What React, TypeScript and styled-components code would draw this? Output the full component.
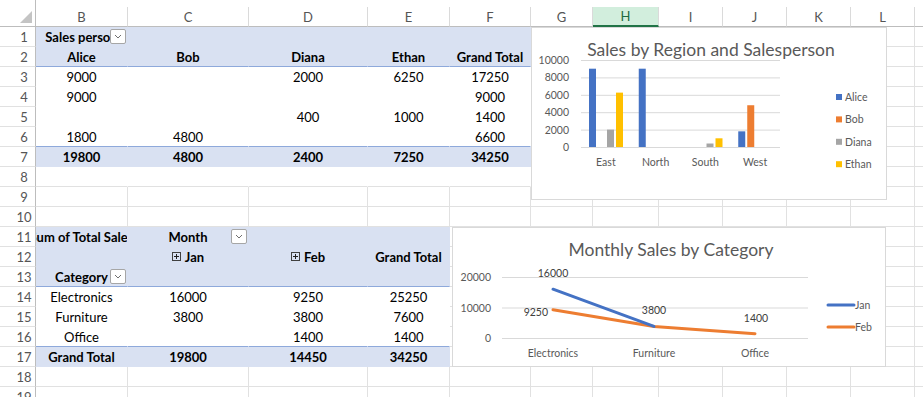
import React from 'react';
import styled, { createGlobalStyle } from 'styled-components';

const GlobalStyle = createGlobalStyle`
  html, body { margin: 0; padding: 0; background: #fff; overflow: hidden; }
  body { font-family: Lato, "Open Sans", sans-serif; }
`;

const COLS = ['B', 'C', 'D', 'E', 'F', 'G', 'H', 'I', 'J', 'K', 'L', 'M'];
const WIDTHS = [92, 121, 119, 82, 81, 62, 66, 64, 64, 64, 64, 64];
const ROWS = Array.from({ length: 19 }, (_, i) => i + 1);

const GRID = '#E1E1E1';
const PIVOT = '#D9E1F2';
const PIVOT_LINE = '#8EA9DB';

const Sheet = styled.div`
  position: relative;
  width: 923px;
  height: 397px;
  overflow: hidden;
  display: grid;
  grid-template-columns: 36px ${WIDTHS.map((w) => w + 'px').join(' ')};
  grid-template-rows: 27px repeat(19, 20px);
  font-size: 13px;
  color: #000;
`;

const Corner = styled.div`
  position: relative;
  box-sizing: border-box;
  border-right: 1px solid #BDBDBD;
  border-bottom: 1px solid #BDBDBD;
  &::after {
    content: '';
    position: absolute;
    right: 3px;
    bottom: 3px;
    border-style: solid;
    border-width: 0 0 12px 12px;
    border-color: transparent transparent #C4C4C4 transparent;
  }
`;

const ColHead = styled.div<{ $active?: boolean }>`
  box-sizing: border-box;
  margin-top: 7px;
  display: flex;
  align-items: center;
  justify-content: center;
  font-size: 13px;
  color: ${(p) => (p.$active ? '#1E6B41' : '#555')};
  background: ${(p) => (p.$active ? '#D2EEDD' : '#fff')};
  border-right: 1px solid #DADADA;
  border-bottom: ${(p) => (p.$active ? '2px solid #217346' : '1px solid #BDBDBD')};
`;

const RowHead = styled.div`
  box-sizing: border-box;
  display: flex;
  align-items: center;
  justify-content: center;
  padding-left: 13px;
  font-size: 13px;
  color: #555;
  border-right: 1px solid #BDBDBD;
  border-bottom: 1px solid ${GRID};
`;

const Cell = styled.div<{ $fill: string; $bold: boolean; $right: string; $bottom: string }>`
  position: relative;
  box-sizing: border-box;
  display: flex;
  align-items: center;
  justify-content: center;
  overflow: hidden;
  white-space: nowrap;
  background: ${(p) => p.$fill};
  font-weight: ${(p) => (p.$bold ? 700 : 400)};
  border-right: 1px solid ${(p) => p.$right};
  border-bottom: 1px solid ${(p) => p.$bottom};
`;

const Dropdown = styled.span`
  position: absolute;
  right: 1px;
  top: 2px;
  width: 16px;
  height: 15px;
  box-sizing: border-box;
  background: #fff;
  border: 1px solid #A6A6A6;
  border-radius: 2px;
  display: flex;
  align-items: center;
  justify-content: center;
`;

const PlusBox = styled.span`
  position: relative;
  display: inline-block;
  width: 9px;
  height: 9px;
  box-sizing: border-box;
  border: 1px solid #404040;
  margin-right: 4px;
  &::before, &::after {
    content: '';
    position: absolute;
    background: #202020;
  }
  &::before { left: 1px; right: 1px; top: 3px; height: 1px; }
  &::after { top: 1px; bottom: 1px; left: 3px; width: 1px; }
`;

const ChartBox = styled.div<{ $x: number; $y: number; $w: number; $h: number }>`
  position: absolute;
  left: ${(p) => p.$x}px;
  top: ${(p) => p.$y}px;
  width: ${(p) => p.$w}px;
  height: ${(p) => p.$h}px;
  box-sizing: border-box;
  background: #fff;
  border: 1px solid #D9D9D9;
  font-family: Lato, sans-serif;
`;

type Content = { text?: string; drop?: boolean; plus?: boolean };

const data: Record<number, (string | Content)[]> = {
  1: [{ text: 'Sales person', drop: true }],
  2: ['Alice', 'Bob', 'Diana', 'Ethan', 'Grand Total'],
  3: ['9000', '', '2000', '6250', '17250'],
  4: ['9000', '', '', '', '9000'],
  5: ['', '', '400', '1000', '1400'],
  6: ['1800', '4800', '', '', '6600'],
  7: ['19800', '4800', '2400', '7250', '34250'],
  11: ['Sum of Total Sales', { text: 'Month', drop: true }],
  12: ['', { text: 'Jan', plus: true }, { text: 'Feb', plus: true }, 'Grand Total'],
  13: [{ text: 'Category', drop: true }],
  14: ['Electronics', '16000', '9250', '25250'],
  15: ['Furniture', '3800', '3800', '7600'],
  16: ['Office', '', '1400', '1400'],
  17: ['Grand Total', '19800', '14450', '34250'],
};

function cellStyle(r: number, c: number) {
  if (r <= 8 && c <= 4) {
    const filled = r === 1 || r === 2 || r === 7;
    return {
      fill: filled ? PIVOT : '#fff',
      bold: filled,
      right: 'transparent',
      bottom: r === 2 || r === 6 ? PIVOT_LINE : r === 8 ? GRID : 'transparent',
    };
  }
  if (r >= 11 && r <= 17 && c <= 3) {
    const filled = r <= 13 || r === 17;
    return {
      fill: filled ? PIVOT : '#fff',
      bold: filled,
      right: 'transparent',
      bottom: r === 13 || r === 16 ? PIVOT_LINE : 'transparent',
    };
  }
  return { fill: '#fff', bold: false, right: GRID, bottom: GRID };
}

const Chevron = () => (
  <svg width="8" height="5" viewBox="0 0 8 5">
    <path d="M1 1 L4 4 L7 1" fill="none" stroke="#707070" strokeWidth="1" />
  </svg>
);

const AXIS = '#595959';
const BLUE = '#4472C4';
const ORANGE = '#ED7D31';
const GREY = '#A5A5A5';
const GOLD = '#FFC000';

const regions = ['East', 'North', 'South', 'West'];
const series = [
  { name: 'Alice', color: BLUE, values: [9000, 9000, 0, 1800] },
  { name: 'Bob', color: ORANGE, values: [0, 0, 0, 4800] },
  { name: 'Diana', color: GREY, values: [2000, 0, 400, 0] },
  { name: 'Ethan', color: GOLD, values: [6250, 0, 1000, 0] },
];

const BarChart = () => {
  const left = 49;
  const right = 248;
  const base = 119;
  const scale = 87 / 10000;
  const step = (right - left) / 4;
  return (
    <ChartBox $x={531} $y={27} $w={356} $h={173}>
      <svg width="356" height="173" style={{ display: 'block' }}>
        <text x="179" y="28" textAnchor="middle" fontSize="17.5" fill={AXIS}>
          Sales by Region and Salesperson
        </text>
        {[0, 2000, 4000, 6000, 8000, 10000].map((v) => {
          const y = base - v * scale;
          return (
            <g key={v}>
              <line x1={left} x2={right} y1={y + 0.5} y2={y + 0.5} stroke="#D9D9D9" />
              <text x="37" y={y + 4} textAnchor="end" fontSize="10.5" fill={AXIS}>{v}</text>
            </g>
          );
        })}
        {regions.map((reg, i) => (
          <g key={reg}>
            {series.map((s, j) =>
              s.values[i] ? (
                <rect
                  key={s.name}
                  x={left + i * step + 8 + j * 9}
                  y={base - s.values[i] * scale}
                  width="7"
                  height={s.values[i] * scale}
                  fill={s.color}
                />
              ) : null
            )}
            <text x={left + i * step + step / 2} y="138" textAnchor="middle" fontSize="10.5" fill={AXIS}>
              {reg}
            </text>
          </g>
        ))}
        {series.map((s, j) => {
          const y = 69 + j * 22.4;
          return (
            <g key={s.name}>
              <rect x="304" y={y - 3} width="6" height="6" fill={s.color} />
              <text x="313" y={y + 4} fontSize="10.5" fill={AXIS}>{s.name}</text>
            </g>
          );
        })}
      </svg>
    </ChartBox>
  );
};

const LineChart = () => {
  const left = 49;
  const right = 355;
  const base = 110;
  const scale = 61 / 20000;
  const cx = [100, 201, 302];
  const y = (v: number) => base - v * scale;
  const jan = [16000, 3800];
  const feb = [9250, 3800, 1400];
  return (
    <ChartBox $x={452} $y={227} $w={434} $h={140}>
      <svg width="434" height="140" style={{ display: 'block' }}>
        <text x="218" y="28" textAnchor="middle" fontSize="17.5" fill={AXIS}>
          Monthly Sales by Category
        </text>
        {[0, 10000, 20000].map((v) => (
          <g key={v}>
            <line x1={left} x2={right} y1={y(v) + 0.5} y2={y(v) + 0.5} stroke="#D9D9D9" />
            <text x="38" y={y(v) + 4} textAnchor="end" fontSize="10.5" fill={AXIS}>{v}</text>
          </g>
        ))}
        <polyline
          points={feb.map((v, i) => `${cx[i]},${y(v)}`).join(' ')}
          fill="none"
          stroke={ORANGE}
          strokeWidth="3"
          strokeLinecap="round"
          strokeLinejoin="round"
        />
        <polyline
          points={jan.map((v, i) => `${cx[i]},${y(v)}`).join(' ')}
          fill="none"
          stroke={BLUE}
          strokeWidth="3"
          strokeLinecap="round"
          strokeLinejoin="round"
        />
        <text x="100" y="49" textAnchor="middle" fontSize="10.5" fill="#404040">16000</text>
        <text x="95" y="88" textAnchor="end" fontSize="10.5" fill="#404040">9250</text>
        <text x="201" y="86" textAnchor="middle" fontSize="10.5" fill="#404040">3800</text>
        <text x="303" y="94" textAnchor="middle" fontSize="10.5" fill="#404040">1400</text>
        {['Electronics', 'Furniture', 'Office'].map((c, i) => (
          <text key={c} x={cx[i]} y="129" textAnchor="middle" fontSize="10.5" fill={AXIS}>{c}</text>
        ))}
        <line x1="375" x2="401" y1="77" y2="77" stroke={BLUE} strokeWidth="3" strokeLinecap="round" />
        <text x="402" y="81" fontSize="10.5" fill={AXIS}>Jan</text>
        <line x1="375" x2="401" y1="99" y2="99" stroke={ORANGE} strokeWidth="3" strokeLinecap="round" />
        <text x="402" y="103" fontSize="10.5" fill={AXIS}>Feb</text>
      </svg>
    </ChartBox>
  );
};

export default function App() {
  return (
    <>
      <GlobalStyle />
      <Sheet>
        <Corner />
        {COLS.map((c) => (
          <ColHead key={c} $active={c === 'H'}>{c}</ColHead>
        ))}
        {ROWS.map((r) => (
          <React.Fragment key={r}>
            <RowHead>{r}</RowHead>
            {COLS.map((_, c) => {
              const st = cellStyle(r, c);
              const raw = data[r]?.[c];
              const content: Content = typeof raw === 'string' ? { text: raw } : raw || {};
              return (
                <Cell key={c} $fill={st.fill} $bold={st.bold} $right={st.right} $bottom={st.bottom}>
                  {content.plus && <PlusBox />}
                  {content.text}
                  {content.drop && (
                    <Dropdown>
                      <Chevron />
                    </Dropdown>
                  )}
                </Cell>
              );
            })}
          </React.Fragment>
        ))}
        <BarChart />
        <LineChart />
      </Sheet>
    </>
  );
}
